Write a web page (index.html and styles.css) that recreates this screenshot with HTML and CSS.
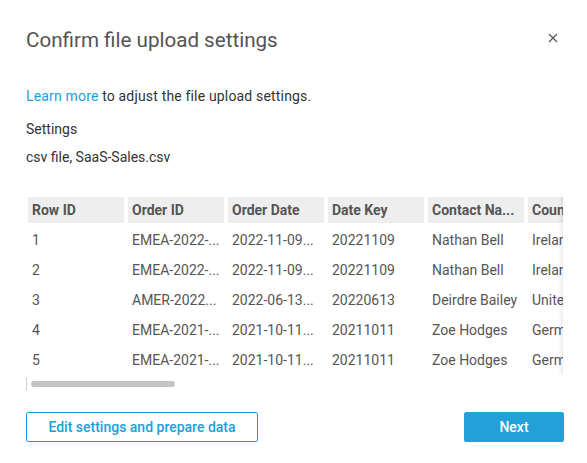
FILE: index.html
```html
<!DOCTYPE html>
<html>
<head>
<meta charset="utf-8">
<link rel="stylesheet" href="styles.css">
</head>
<body>
<div class="modal">
  <div class="header">
    <h1 class="title">Confirm file upload settings</h1>
    <button class="close" aria-label="Close">
      <svg width="10" height="10" viewBox="0 0 10 10"><path d="M1 1L9 9M9 1L1 9" stroke="#555" stroke-width="1.2" fill="none"/></svg>
    </button>
  </div>
  <p class="intro"><a class="link" href="#">Learn more</a> to adjust the file upload settings.</p>
  <p class="label">Settings</p>
  <p class="value">csv file, SaaS-Sales.csv</p>
  <div class="table-wrap">
    <div class="table-clip">
      <div class="grid">
        <div class="th">Row ID</div><div class="th">Order ID</div><div class="th">Order Date</div><div class="th">Date Key</div><div class="th">Contact Na...</div><div class="th">Country</div>
        <div class="td">1</div><div class="td">EMEA-2022-...</div><div class="td">2022-11-09...</div><div class="td">20221109</div><div class="td">Nathan Bell</div><div class="td">Ireland</div>
        <div class="td">2</div><div class="td">EMEA-2022-...</div><div class="td">2022-11-09...</div><div class="td">20221109</div><div class="td">Nathan Bell</div><div class="td">Ireland</div>
        <div class="td">3</div><div class="td">AMER-2022...</div><div class="td">2022-06-13...</div><div class="td">20220613</div><div class="td">Deirdre Bailey</div><div class="td">United</div>
        <div class="td">4</div><div class="td">EMEA-2021-...</div><div class="td">2021-10-11...</div><div class="td">20211011</div><div class="td">Zoe Hodges</div><div class="td">Germany</div>
        <div class="td">5</div><div class="td">EMEA-2021-...</div><div class="td">2021-10-11...</div><div class="td">20211011</div><div class="td">Zoe Hodges</div><div class="td">Germany</div>
      </div>
      <div class="shade"></div>
    </div>
    <div class="scroll">
      <div class="thumb"></div>
    </div>
  </div>
  <div class="footer">
    <button class="btn btn-secondary">Edit settings and prepare data</button>
    <button class="btn btn-primary">Next</button>
  </div>
</div>
</body>
</html>
```
FILE: styles.css
```css
html, body {
  margin: 0;
  padding: 0;
  background: #fff;
}
body {
  font-family: Roboto, "Open Sans", sans-serif;
  color: #333;
  font-size: 14px;
}
.modal {
  width: 587px;
  height: 463px;
  box-sizing: border-box;
  padding: 0 23px 0 26px;
}
.header {
  display: flex;
  align-items: center;
  justify-content: space-between;
  height: 80px;
}
.title {
  margin: 0;
  font-size: 20.6px;
  font-weight: 400;
  color: #545454;
}
.close {
  border: 0;
  background: none;
  padding: 0;
  width: 10px;
  height: 10px;
  margin-right: 6px;
  margin-top: -5px;
  display: flex;
}
.intro, .label, .value {
  margin: 0;
  line-height: 20px;
}
.intro { margin-top: 6px; letter-spacing: 0.17px; }
.label { margin-top: 13px; }
.value { margin-top: 8px; }
.link { color: #1a9fd9; text-decoration: none; }
.table-wrap {
  margin-top: 30px;
  width: 537px;
}
.table-clip {
  position: relative;
  overflow: hidden;
  padding-left: 2px;
  height: 178px;
}
.grid {
  display: grid;
  grid-template-columns: repeat(6, 96px);
  column-gap: 4px;
  grid-template-rows: 28px repeat(5, 30px);
}
.th {
  align-self: start;
  height: 26px;
  background: #eee;
  font-weight: 700;
  color: #555;
  padding-left: 4px;
  line-height: 26px;
  white-space: nowrap;
  overflow: hidden;
}
.td {
  color: #555;
  padding-left: 4px;
  line-height: 30px;
  white-space: nowrap;
  overflow: hidden;
}
.shade {
  position: absolute;
  top: 0;
  right: 0;
  width: 5px;
  height: 100%;
  background: linear-gradient(to right, rgba(0,0,0,0), rgba(0,0,0,0.07));
}
.scroll {
  display: flex;
  align-items: center;
  height: 14px;
  border-left: 1px solid #ccc;
  margin-top: 2px;
}
.thumb {
  width: 144px;
  height: 6px;
  border-radius: 3px;
  background: #c4c4c4;
  margin-left: 4px;
}
.footer {
  display: flex;
  justify-content: space-between;
  margin-top: 21px;
}
.btn {
  font-family: Roboto, "Open Sans", sans-serif;
  font-size: 14px;
  font-weight: 500;
  height: 30px;
  border-radius: 2px;
  box-sizing: border-box;
  cursor: pointer;
}
.btn-secondary {
  width: 232px;
  background: #fff;
  border: 1px solid #1a9fd9;
  color: #1a9fd9;
}
.btn-primary {
  width: 100px;
  background: #22a0d8;
  border: 1px solid #22a0d8;
  color: #fff;
}
```
